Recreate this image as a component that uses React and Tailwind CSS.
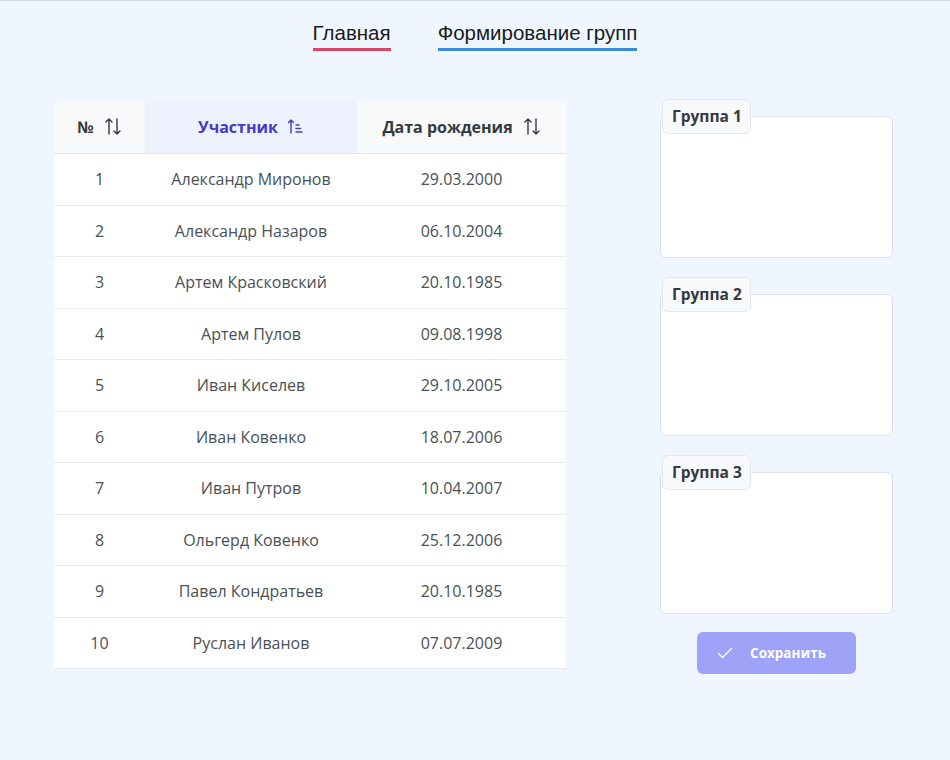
import React from "react";

const rows = [
  [1, "Александр Миронов", "29.03.2000"],
  [2, "Александр Назаров", "06.10.2004"],
  [3, "Артем Красковский", "20.10.1985"],
  [4, "Артем Пулов", "09.08.1998"],
  [5, "Иван Киселев", "29.10.2005"],
  [6, "Иван Ковенко", "18.07.2006"],
  [7, "Иван Путров", "10.04.2007"],
  [8, "Ольгерд Ковенко", "25.12.2006"],
  [9, "Павел Кондратьев", "20.10.1985"],
  [10, "Руслан Иванов", "07.07.2009"],
];

function SortAlt() {
  return (
    <svg width="18" height="19" viewBox="0 0 18 19" fill="none" stroke="currentColor" strokeWidth="1.4" strokeLinecap="round" strokeLinejoin="round">
      <path d="M5 17V2M2 5l3-3 3 3" />
      <path d="M13 2v15M10 14l3 3 3-3" />
    </svg>
  );
}

function SortAmountUp() {
  return (
    <svg width="17" height="17" viewBox="0 0 17 17" fill="none" stroke="currentColor" strokeWidth="1.4" strokeLinecap="round" strokeLinejoin="round">
      <path d="M4 15V2M1.5 4.5L4 2l2.5 2.5" />
      <path d="M9 7h3M9 10.5h4.5M9 14h6" />
    </svg>
  );
}

function Group({ title }) {
  return (
    <div className="relative pt-[17px]">
      <div className="absolute left-[2px] top-0 pl-[9px] pr-[8px] h-[35px] flex items-center bg-[#f8f9fa] border border-[#e5e7eb] rounded-md text-[15.5px] font-bold text-[#343a40] z-10">
        {title}
      </div>
      <div className="w-[233px] h-[142px] bg-white border border-[#dee2e6] rounded-md" />
    </div>
  );
}

export default function App() {
  return (
    <div className="min-h-[760px] bg-[#eff6ff] border-t border-[#d1d9e3]" style={{ fontFamily: '"Open Sans", sans-serif' }}>
      <nav className="flex justify-center gap-[47px] pt-[19px]" style={{ fontFamily: '"Liberation Sans", Arial, sans-serif' }}>
        <div className="text-[20.5px] text-[#1a1a1a] leading-[26px] pb-[2px] border-b-[3px] border-[#dc4668]">Главная</div>
        <div className="text-[20.5px] text-[#1a1a1a] leading-[26px] pb-[2px] border-b-[3px] border-[#3b8ad9]">Формирование групп</div>
      </nav>

      <div className="flex pt-[49px] pl-[54px]">
        <div className="w-[512px] flex flex-col">
          <div className="grid grid-cols-[91px_212px_209px] h-[54px] text-[16px] font-bold border-b border-[#e5e7eb]">
            <div className="bg-[#f8f9fa] text-[#343a40] flex items-center justify-center gap-[10px]">
              № <SortAlt />
            </div>
            <div className="bg-[#eef2ff] text-[#4338ca] flex items-center justify-center gap-[9px]">
              Участник <SortAmountUp />
            </div>
            <div className="bg-[#f8f9fa] text-[#343a40] flex items-center justify-center gap-[10px]">
              Дата рождения <SortAlt />
            </div>
          </div>
          {rows.map(([n, name, date]) => (
            <div key={n} className="grid grid-cols-[91px_212px_209px] h-[51.5px] bg-white text-[16px] text-[#495057] border-b border-[#e9ecef] items-center text-center">
              <div>{n}</div>
              <div>{name}</div>
              <div>{date}</div>
            </div>
          ))}
        </div>

        <div className="ml-[94px] -mt-[1px] flex flex-col gap-[19px]">
          <Group title="Группа 1" />
          <Group title="Группа 2" />
          <Group title="Группа 3" />
          <div className="pl-[37px] -mt-[1px]">
            <button className="w-[159px] h-[42px] rounded-md bg-[#9ea3f7] text-white font-bold text-[13.5px] flex items-center justify-center gap-[17px] pr-[10px]">
              <svg width="16" height="16" viewBox="0 0 16 16" fill="none" stroke="currentColor" strokeWidth="1.4" strokeLinecap="round" strokeLinejoin="round">
                <path d="M1.5 8.5l4 4 9-9" />
              </svg>
              Сохранить
            </button>
          </div>
        </div>
      </div>
    </div>
  );
}
